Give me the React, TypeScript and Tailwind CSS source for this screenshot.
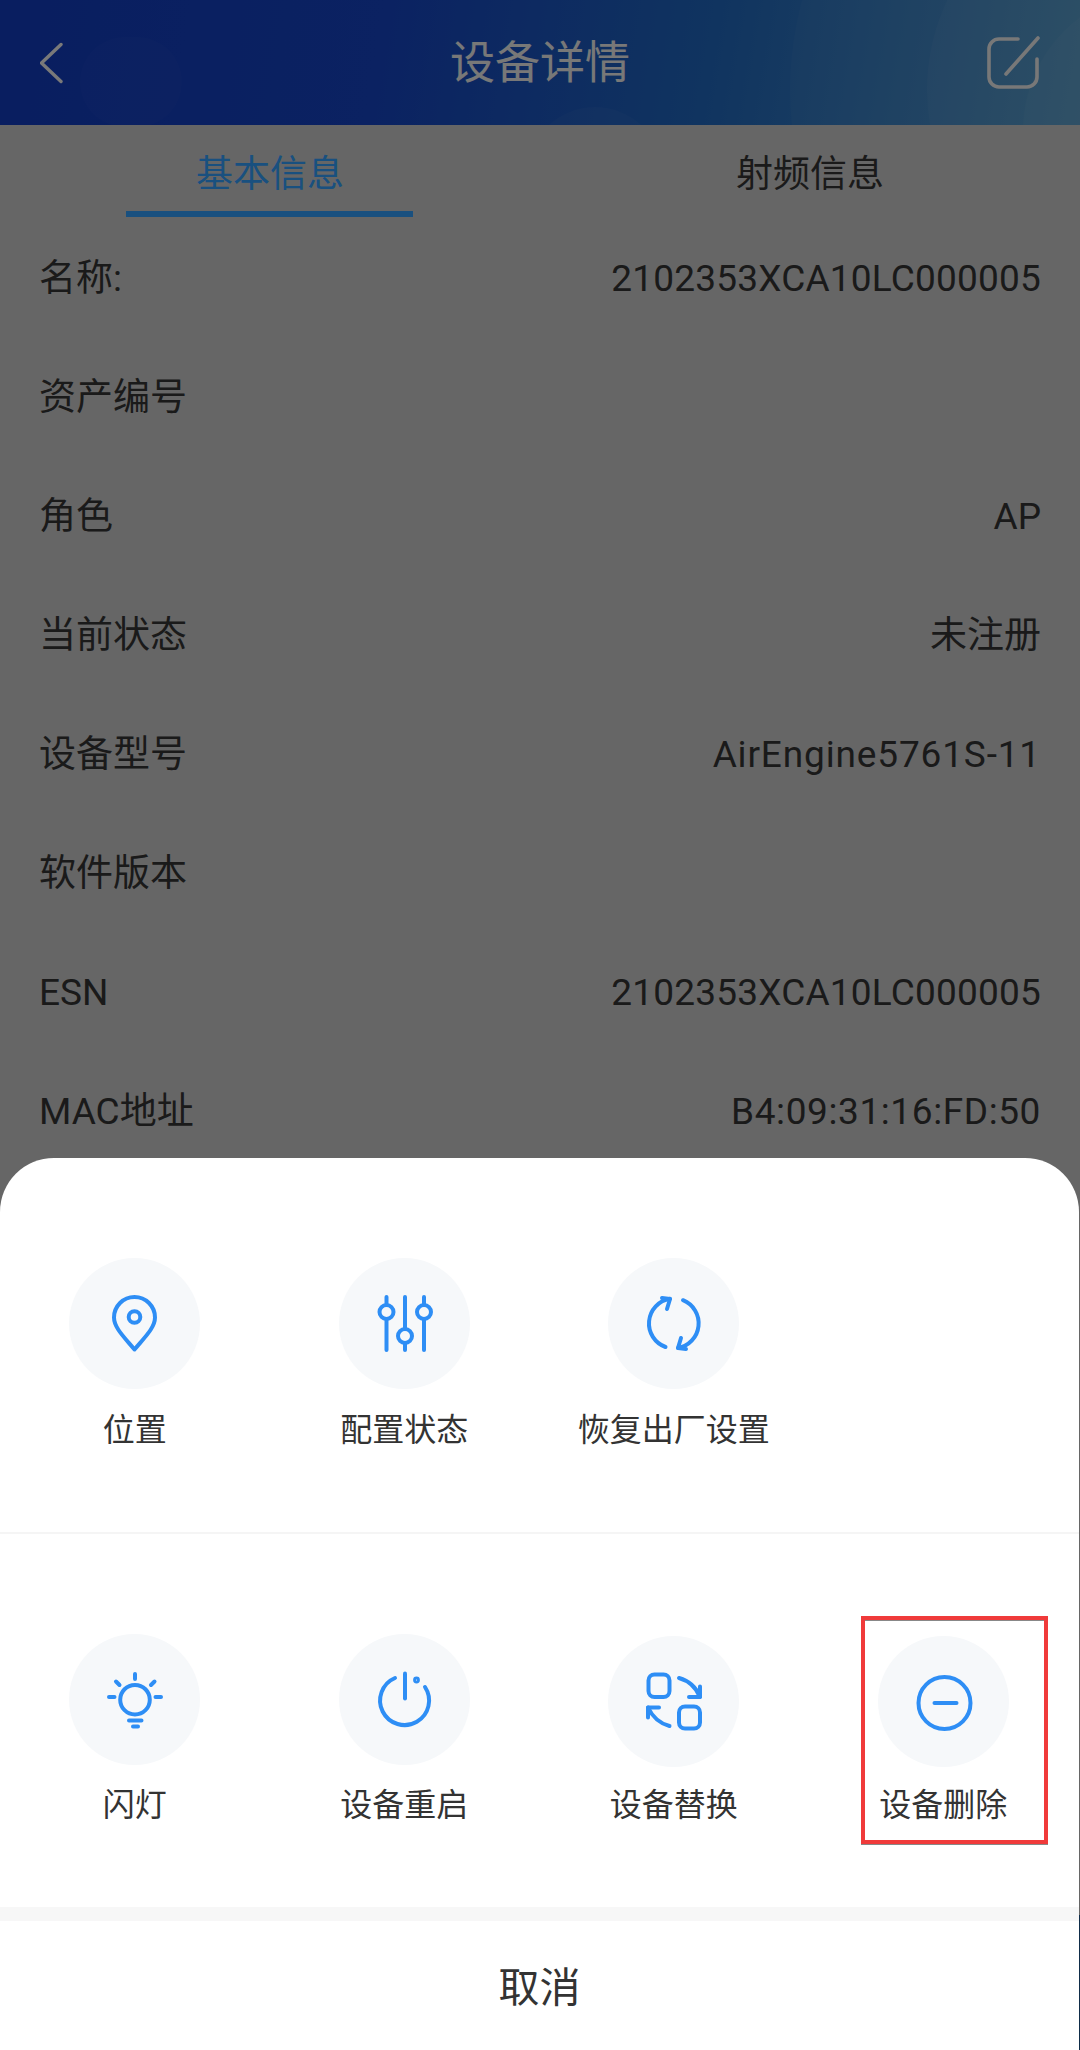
import React from "react";

const FONT = "font-['Roboto','Noto_Sans_CJK_SC',sans-serif]";

const rows: [string, string, string][] = [
  ["名称:", "2102353XCA10LC000005", "tracking-[0.2px]"],
  ["资产编号", "", ""],
  ["角色", "AP", ""],
  ["当前状态", "未注册", ""],
  ["设备型号", "AirEngine5761S-11", "tracking-[0.85px]"],
  ["软件版本", "", ""],
  ["ESN", "2102353XCA10LC000005", "tracking-[0.2px]"],
  ["MAC地址", "B4:09:31:16:FD:50", "tracking-[0.6px]"],
];

function Glyph({ children }: { children: React.ReactNode }) {
  return (
    <svg
      viewBox="0 0 131 131"
      width={131}
      height={131}
      fill="none"
      stroke="#2e8ef5"
      strokeWidth={4}
      strokeLinecap="round"
      strokeLinejoin="round"
    >
      {children}
    </svg>
  );
}

const PinIcon = () => (
  <Glyph>
    <path d="M65.5 91.5C56 80 45 70 45 59.5a20.5 20.5 0 0 1 41 0C86 70 75 80 65.5 91.5Z" />
    <circle cx="65.5" cy="59" r="5.8" />
  </Glyph>
);

const SlidersIcon = () => (
  <Glyph>
    <path d="M47.5 39V92M66 39V92M85 39V92" />
    <circle cx="47.5" cy="54" r="7" fill="#f6f8fa" />
    <circle cx="66" cy="78" r="7" fill="#f6f8fa" />
    <circle cx="85" cy="54" r="7" fill="#f6f8fa" />
  </Glyph>
);

const RefreshIcon = () => (
  <Glyph>
    <path d="M62 40.800A25 25 0 0 0 57.500 89" />
    <path d="M54 40L62 41L59 51" />
    <path d="M75 42.200A25 25 0 0 1 70 90" />
    <path d="M78 91L70 90L73 80" />
  </Glyph>
);

const BulbIcon = () => (
  <Glyph>
    <circle cx="66" cy="65.700" r="14.800" />
    <path d="M66 40V45M47 47.500L50.500 51M85.500 47.500L82 51M40 63H45.500M86.500 63H92M60 86.500H72.500M64 92.500H69" />
  </Glyph>
);

const PowerIcon = () => (
  <Glyph>
    <path d="M66 39.500V64.500" />
    <path d="M56 44A24.500 24.500 0 1 0 86 53" />
    <circle cx="77.500" cy="46" r="1.400" />
  </Glyph>
);

const SwapIcon = () => (
  <Glyph>
    <rect x="40.500" y="38.500" width="21" height="22.500" rx="6" />
    <rect x="71" y="70.500" width="21" height="22" rx="6" />
    <path d="M71 42C80 44.500 88 51 92 61" />
    <path d="M81 61H92V50.500" />
    <path d="M61.500 90C52 87.500 44.500 81 40 71.500" />
    <path d="M51 71.500H40V81.500" />
  </Glyph>
);

const MinusIcon = () => (
  <Glyph>
    <circle cx="66.500" cy="67" r="26" />
    <path d="M56.500 67H78.500" />
  </Glyph>
);

type Item = { label: string; icon: React.ReactNode; variant?: "first" | "second" | "low" };

function Action({ label, icon, variant = "first" }: Item) {
  const gap = variant === "first" ? "mt-[19px]" : variant === "second" ? "mt-[18px]" : "mt-[16px]";
  return (
    <div className="flex flex-col items-center">
      <div
        className={`flex h-[131px] w-[131px] items-center justify-center rounded-full bg-[#f6f8fa] ${
          variant === "low" ? "mt-[2px]" : ""
        }`}
      >
        {icon}
      </div>
      <div className={`text-[32px] leading-[44px] whitespace-nowrap text-[#333333] ${gap}`}>{label}</div>
    </div>
  );
}

export default function App() {
  return (
    <div className={`relative h-[2050px] w-[1080px] overflow-hidden bg-[#cccccc] ${FONT}`}>
      <header className="relative flex h-[125px] items-center justify-between overflow-hidden bg-[linear-gradient(100deg,#123cc0_0%,#1644c4_35%,#2068c0_65%,#4f98c8_100%)] px-10">
        <span className="absolute left-[80px] top-[37px] h-[90px] w-[102px] rounded-full bg-white/[0.02]" />
        <span className="absolute left-[527px] top-[107px] h-[136px] w-[136px] rounded-full bg-white/[0.03]" />
        <span className="absolute left-[790px] top-[-250px] h-[680px] w-[680px] rounded-full bg-white/[0.03]" />
        <span className="absolute left-[927px] top-[-120px] h-[420px] w-[420px] rounded-full bg-white/[0.04]" />
        <span className="absolute left-[1023px] top-[-10px] h-[280px] w-[280px] rounded-full bg-white/[0.04]" />
        <div className="relative w-[60px]">
          <svg width="30" height="50" viewBox="0 0 30 50" fill="none" stroke="#f2f2f2" strokeWidth="3.4" strokeLinecap="round" strokeLinejoin="round">
            <path d="M21 6.500L1.500 25L21 43.500" />
          </svg>
        </div>
        <h1 className="relative mt-[2px] text-[45px] font-normal leading-none text-[#f0f0f0]">设备详情</h1>
        <div className="relative flex w-[60px] justify-end">
          <svg width="54" height="54" viewBox="0 0 54 54" fill="none" stroke="#f0f0f0" strokeWidth="3.6" strokeLinecap="round" strokeLinejoin="round">
            <path d="M32 3H13A10 10 0 0 0 3 13V41A10 10 0 0 0 13 51H41A10 10 0 0 0 51 41V23" />
            <path d="M52 2L20 38" />
          </svg>
        </div>
      </header>

      <nav className="grid h-[92px] grid-cols-2 text-[37px] leading-none">
        <div className="relative flex items-start justify-center pt-[31px] text-[#32a0ff]">
          基本信息
          <span className="absolute bottom-0 left-[126px] h-[6px] w-[287px] bg-[#32a0ff]" />
        </div>
        <div className="flex items-start justify-center pt-[31px] text-[#343434]">射频信息</div>
      </nav>

      <main className="flex flex-col pl-[39px] pr-[39px] pt-[2px] text-[37px] text-[#343434]">
        {rows.map(([k, v, t]) => (
          <div key={k} className="flex h-[119px] items-center justify-between">
            <span>{k}</span>
            <span className={t}>{v}</span>
          </div>
        ))}
      </main>

      <div className="absolute inset-0 bg-black/50" />

      <span className="absolute bottom-0 right-0 h-[135px] w-px bg-[#0f2c48]" />

      <section className="absolute bottom-0 left-0 h-[892px] w-[1079px] rounded-t-[54px] bg-white">
        <div className="grid h-[374px] w-[1078px] grid-cols-4 pt-[100px]">
          <Action label="位置" icon={<PinIcon />} />
          <Action label="配置状态" icon={<SlidersIcon />} />
          <Action label="恢复出厂设置" icon={<RefreshIcon />} />
        </div>
        <div className="h-[2px] bg-[#f5f5f5]" />
        <div className="grid h-[373px] w-[1078px] grid-cols-4 pt-[100px]">
          <Action label="闪灯" icon={<BulbIcon />} variant="second" />
          <Action label="设备重启" icon={<PowerIcon />} variant="second" />
          <Action label="设备替换" icon={<SwapIcon />} variant="low" />
          <Action label="设备删除" icon={<MinusIcon />} variant="low" />
        </div>
        <div className="h-[14px] bg-[#f7f7f7]" />
        <button className="flex h-[129px] w-full items-center justify-center pt-[6px] text-[41px] text-[#333333]">取消</button>

        <div className="absolute left-[861px] top-[458px] h-[228px] w-[187px] border-4 border-[#f03a3a] shadow-[inset_0_1px_0_#888888,0_1px_0_#888888]" />
      </section>
    </div>
  );
}
